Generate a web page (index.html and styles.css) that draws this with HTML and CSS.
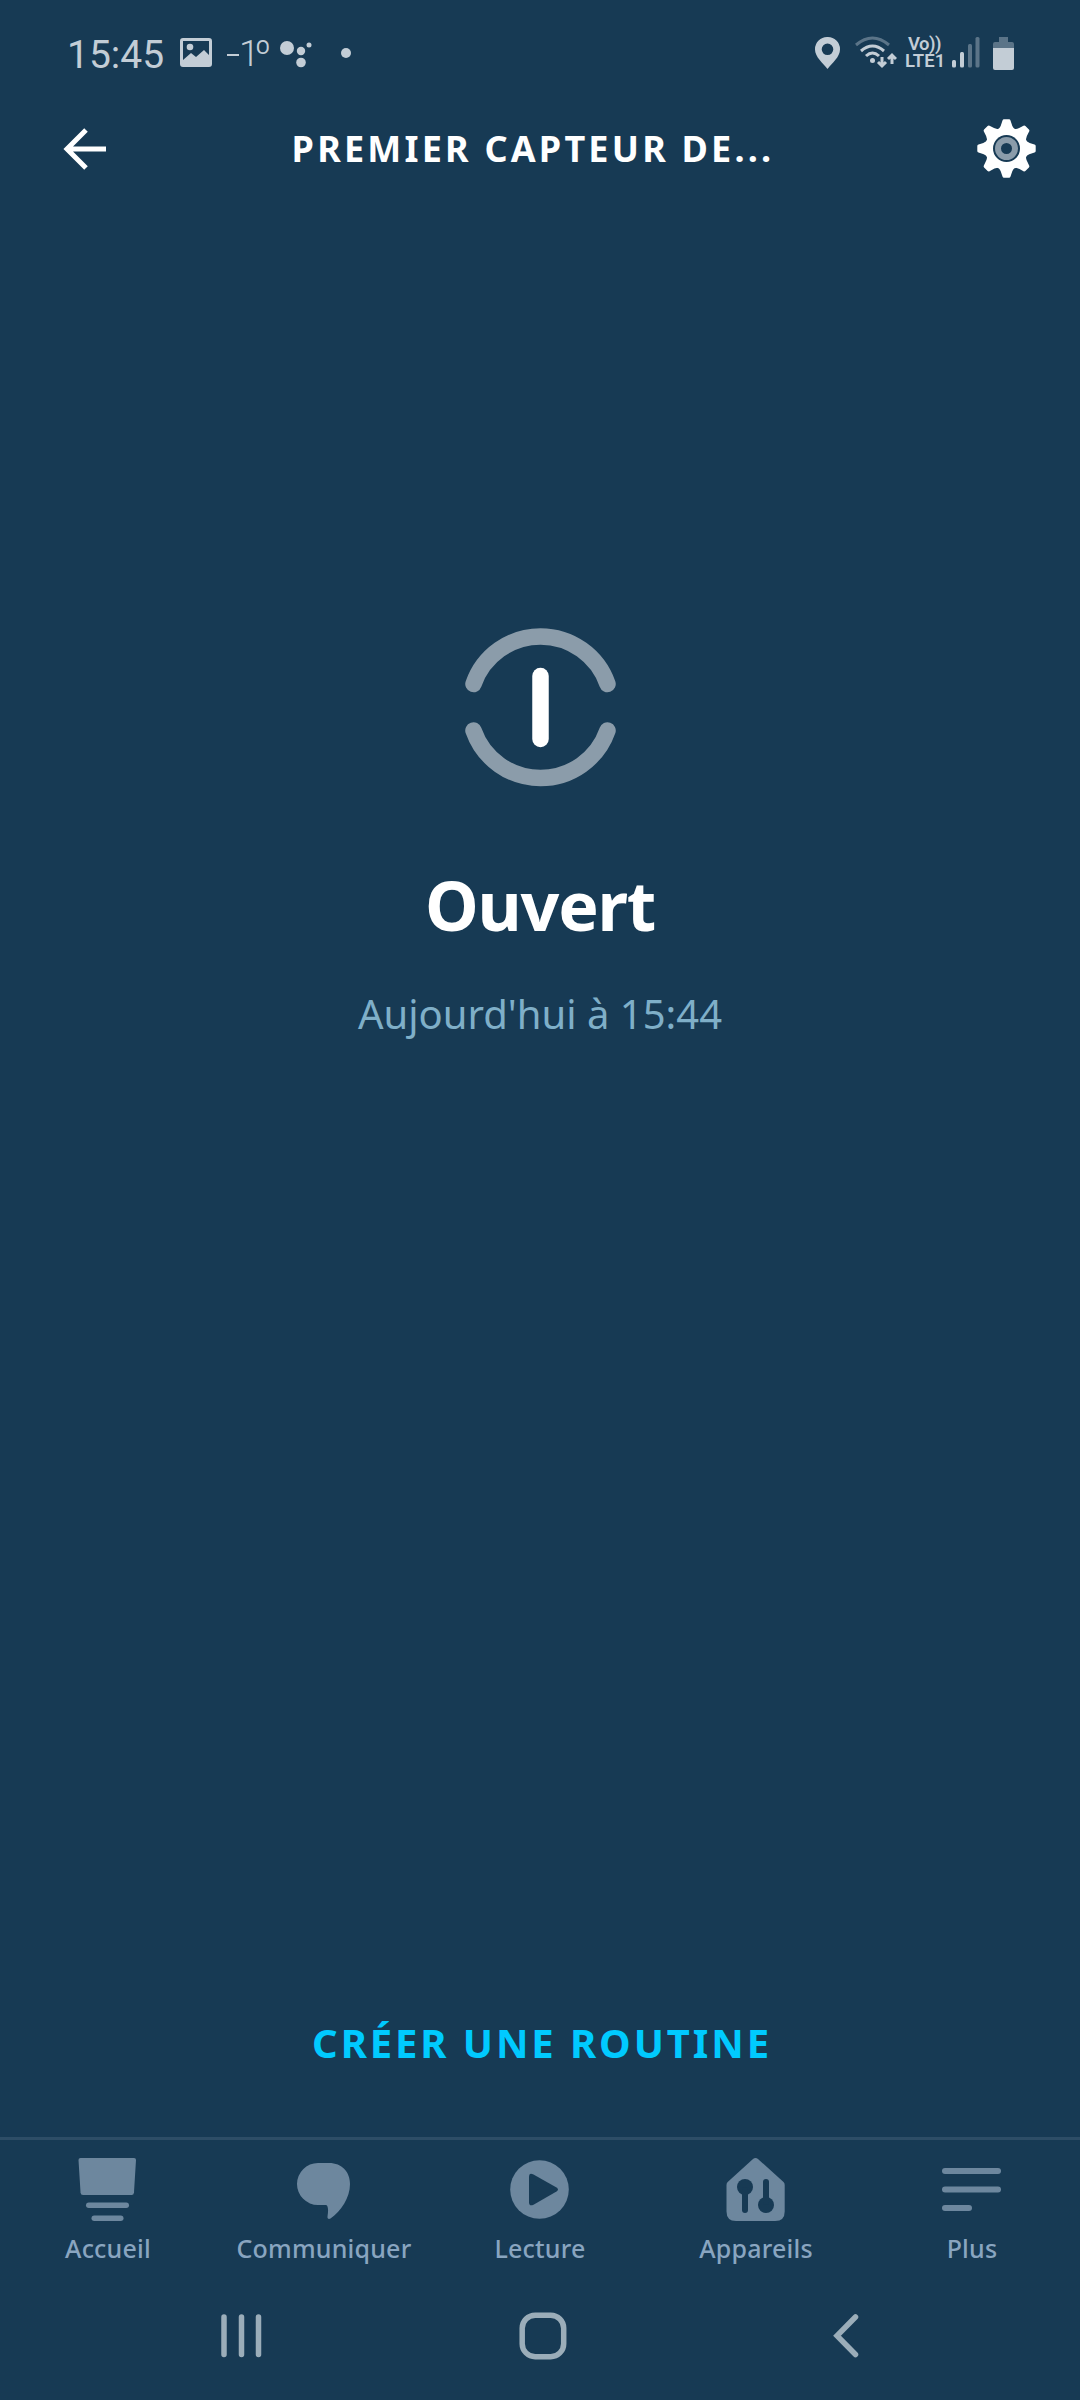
FILE: index.html
```html
<!DOCTYPE html>
<html lang="fr">
<head>
    <meta charset="UTF-8">
    <meta name="viewport" content="width=device-width, initial-scale=1.0">
    <title>Premier capteur de...</title>
    <link rel="stylesheet" href="styles.css">
</head>
<body>
    <div class="screen">
        <div class="status-bar">
            <span class="clock">15:45</span>
            <svg class="status-image" width="32" height="30" viewBox="0 0 32 30">
                <path fill-rule="evenodd" d="M3 0h26q3 0 3 3v23q0 3-3 3H3q-3 0-3-3V3q0-3 3-3zM3 3v19l8-7 5 4 8-7 5 5V3z"/>
                <circle cx="10" cy="9" r="3.3"/>
            </svg>
            <span class="temperature">
                <span class="minus"></span><span class="degree-value">1º</span>
            </span>
            <svg class="status-assistant" width="32" height="30" viewBox="0 0 32 30">
                <circle cx="7" cy="10" r="7"/>
                <circle cx="21" cy="13" r="4.2"/>
                <circle cx="29" cy="7" r="2.5"/>
                <circle cx="21" cy="24.5" r="4.8"/>
            </svg>
            <span class="status-dot"></span>

            <div class="status-right">
                <svg width="25" height="32" viewBox="0 0 25 32">
                    <path fill-rule="evenodd" d="M12.5 0A12.3 12.3 0 0 1 25 12.5C25 20 17 26 12.5 32 8 26 0 20 0 12.5A12.3 12.3 0 0 1 12.5 0zm0 6.5a5.8 5.8 0 1 0 0 11.6a5.8 5.8 0 1 0 0-11.6z"/>
                </svg>
                <svg class="status-wifi" width="42" height="34" viewBox="0 0 42 34">
                    <g fill="none" stroke="#c3cdd6" stroke-width="3">
                        <path opacity=".4" d="M1 9q16.5-14 33 0"/>
                        <path d="M6 15q11.5-10 23 0"/>
                        <path d="M11 20q6.5-6 13 0"/>
                        <path d="M27 21v9M23 26l4 4 4-4M37 28V19M33 23l4-4 4 4"/>
                    </g>
                    <circle cx="17.5" cy="24.5" r="2.5"/>
                </svg>
                <div class="volte"><span class="vo">Vo))</span><span>LTE1</span></div>
                <svg class="status-signal" width="28" height="32" viewBox="0 0 28 32">
                    <rect x="0" y="23" width="4" height="7.5" rx="1.5"/>
                    <rect x="8" y="15" width="4" height="15.5" rx="1.5"/>
                    <rect opacity=".4" x="16" y="7" width="4" height="23.5" rx="1.5"/>
                    <rect opacity=".4" x="23.5" y="0" width="4" height="30.5" rx="1.5"/>
                </svg>
                <svg class="status-battery" width="21" height="33" viewBox="0 0 21 33">
                    <path opacity=".4" d="M6 0h9v5h4q2 0 2 2v4H0V7q0-2 2-2h4z"/>
                    <path d="M0 11h21v20q0 2-2 2H2q-2 0-2-2z"/>
                </svg>
            </div>
        </div>

        <header class="header">
            <svg class="back" width="44" height="42" viewBox="0 0 44 42">
                <path fill="none" stroke="#fff" stroke-width="5" d="M43 21H4M23 2L4 21l19 19"/>
            </svg>
            <h1>PREMIER CAPTEUR DE...</h1>
            <svg class="settings" width="60" height="60" viewBox="-29.5 -29.5 60 60">
                <defs>
                    <path id="tooth" d="M-8-19q2.5-3 4-9 .3-1.2 1.5-1.2h5q1.2 0 1.5 1.2 1.5 6 4 9z"/>
                </defs>
                <g fill="#fff">
                    <circle r="21.5"/>
                    <use href="#tooth"/>
                    <use href="#tooth" transform="rotate(45)"/>
                    <use href="#tooth" transform="rotate(90)"/>
                    <use href="#tooth" transform="rotate(135)"/>
                    <use href="#tooth" transform="rotate(180)"/>
                    <use href="#tooth" transform="rotate(225)"/>
                    <use href="#tooth" transform="rotate(270)"/>
                    <use href="#tooth" transform="rotate(315)"/>
                </g>
                <circle class="cut" r="13.5"/>
                <circle r="8.5" fill="none" stroke="#8b9caa" stroke-width="6"/>
            </svg>
        </header>

        <main class="sensor">
            <svg class="sensor-icon" width="162" height="160" viewBox="-81 -80 162 160">
                <g fill="none" stroke-linecap="round" stroke-width="16.5">
                    <path stroke="#8b9caa" d="M-66.5-23A71 71 0 0 1 67.5-23M-66.5 23.5A71 71 0 0 0 67.5 23.5"/>
                    <path stroke="#fff" d="M.5-31V32"/>
                </g>
            </svg>
            <h2>Ouvert</h2>
            <p>Aujourd'hui à 15:44</p>
        </main>

        <a class="routine" href="#">CRÉER UNE ROUTINE</a>

        <nav class="tabs">
            <a class="tab" href="#">
                <svg width="64" height="64" viewBox="0 0 64 64">
                    <path d="M4.5 1h53.5q2 0 2 2l-2 32.5q-.2 2.5-2.5 2.5h-48.5q-2.3 0-2.5-2.5L2.5 3q0-2 2-2z"/>
                    <rect x="10" y="45.5" width="43" height="5.5" rx="2.75"/>
                    <rect x="15.5" y="58.5" width="32" height="5.5" rx="2.75"/>
                </svg>
                <span>Accueil</span>
            </a>
            <a class="tab" href="#">
                <svg width="64" height="64" viewBox="0 0 64 64">
                    <path d="M26 6h11c13 0 21 9 21 21 0 14-9 27-19.5 34.500-2 1-3.300 0-3-2 .8-5 .8-8-.2-10.500Q35 48 33.5 48H26a21 21 0 0 1 0-42z"/>
                </svg>
                <span>Communiquer</span>
            </a>
            <a class="tab" href="#">
                <svg width="64" height="64" viewBox="0 0 64 64">
                    <circle cx="31.5" cy="32.5" r="29.3"/>
                    <path class="cut" d="M21 20q0-5 4.5-2.5l23 13q3 2 0 4l-23 13.200q-4.500 2-4.500-2.500z"/>
                </svg>
                <span>Lecture</span>
            </a>
            <a class="tab" href="#">
                <svg width="64" height="64" viewBox="0 0 64 64">
                    <path d="M29 2q2.5-2 5 0l25.5 23q1.2 1 1.2 3v26.500q0 9.500-9.500 9.500H12q-9.500 0-9.500-9.500V28q0-2 1.200-3z"/>
                    <circle class="cut" cx="21" cy="30" r="8"/>
                    <rect class="cut" x="18" y="30" width="6" height="26" rx="3"/>
                    <circle class="cut" cx="42" cy="48" r="8"/>
                    <rect class="cut" x="39" y="22" width="6" height="26" rx="3"/>
                </svg>
                <span>Appareils</span>
            </a>
            <a class="tab" href="#">
                <svg width="64" height="64" viewBox="0 0 64 64">
                    <rect x="2" y="11" width="59" height="6" rx="3"/>
                    <rect x="2" y="29.5" width="59" height="6" rx="3"/>
                    <rect x="2" y="48" width="30" height="6" rx="3"/>
                </svg>
                <span>Plus</span>
            </a>
        </nav>

        <div class="system-nav">
            <svg width="42" height="44" viewBox="0 0 42 44">
                <path d="M4 3v37.5M21.5 3v37.5M38.5 3v37.5"/>
            </svg>
            <svg class="home" width="48" height="48" viewBox="0 0 48 48">
                <rect x="3.2" y="3.2" width="41.5" height="41.5" rx="13"/>
            </svg>
            <svg width="26" height="44" viewBox="0 0 26 44">
                <path d="M22.5 3L4 21.8l18.5 18.7"/>
            </svg>
        </div>
    </div>
</body>
</html>
```
FILE: styles.css
```css
body {
    margin: 0;
    background: #173a54;
    font-family: "Noto Sans", "Open Sans", sans-serif;
}
svg {
    display: block;
    flex-shrink: 0;
}
a {
    text-decoration: none;
}
.screen {
    width: 1080px;
    height: 2400px;
    display: flex;
    flex-direction: column;
    overflow: hidden;
}

/* status bar */
.status-bar {
    height: 106px;
    box-sizing: border-box;
    padding: 0 66px 0 67px;
    display: flex;
    align-items: center;
    color: #c3cdd6;
    fill: #c3cdd6;
    font-family: Roboto, sans-serif;
}
.clock {
    width: 113px;
    font-size: 39px;
    line-height: 46px;
    padding-top: 3px;
    white-space: nowrap;
}
.temperature {
    display: flex;
    align-items: flex-start;
    width: 53px;
    margin-left: 15px;
    height: 32px;
}
.minus {
    width: 12px;
    height: 2px;
    margin-top: 17px;
    background: #c3cdd6;
}
.degree-value {
    font-size: 37px;
    font-weight: 300;
    line-height: 34px;
    letter-spacing: -5px;
}
.status-dot {
    width: 10px;
    height: 10px;
    margin-left: 29px;
    border-radius: 50%;
    background: #c3cdd6;
}
.status-right {
    display: flex;
    align-items: center;
    margin-left: auto;
}
.status-wifi {
    margin-left: 15px;
}
.volte {
    display: flex;
    flex-direction: column;
    width: 39px;
    margin-left: 8px;
    font-size: 18.5px;
    font-weight: 600;
    line-height: 17.5px;
}
.vo {
    padding-left: 3px;
    letter-spacing: -0.5px;
}
.status-signal {
    margin-left: 8px;
}
.status-battery {
    margin-left: 13px;
}

/* header */
.header {
    height: 85px;
    box-sizing: border-box;
    padding: 0 43px 0 63px;
    display: flex;
    align-items: center;
    justify-content: space-between;
}
.header h1 {
    margin: 0 18px 0 0;
    color: #fff;
    font-size: 36px;
    font-weight: 700;
    line-height: 50px;
    letter-spacing: 3.2px;
}

/* sensor state */
.sensor {
    flex: 1;
    padding-top: 436px;
    display: flex;
    flex-direction: column;
    align-items: center;
}
.sensor h2 {
    margin: 72px 0 0;
    color: #fff;
    font-size: 68px;
    line-height: 92px;
    letter-spacing: -1.2px;
}
.sensor p {
    margin: 35px 0 0;
    color: #7fafc8;
    font-size: 40px;
    line-height: 56px;
}
.routine {
    height: 54px;
    margin-bottom: 67px;
    padding-left: 4px;
    text-align: center;
    color: #00caff;
    font-size: 40px;
    font-weight: 700;
    line-height: 54px;
    letter-spacing: 2.9px;
}

/* tabs */
.tabs {
    height: 148px;
    box-sizing: border-box;
    padding-top: 17px;
    border-top: 3px solid #2d4d66;
    display: flex;
}
.tab {
    width: 216px;
    display: flex;
    flex-direction: column;
    align-items: center;
    color: #89a5c0;
    fill: #6d879e;
    font-size: 25px;
    font-weight: 500;
    line-height: 34px;
    letter-spacing: 0.2px;
}
.tab span {
    margin-top: 10px;
}
.cut {
    fill: #173a54;
}

/* system navigation */
.system-nav {
    height: 115px;
    box-sizing: border-box;
    padding: 0 221px 14px 220px;
    display: flex;
    align-items: center;
    justify-content: space-between;
    fill: none;
    stroke: #9badb9;
    stroke-width: 5.5;
    stroke-linecap: round;
}
.home {
    margin-right: 9px;
}
```
